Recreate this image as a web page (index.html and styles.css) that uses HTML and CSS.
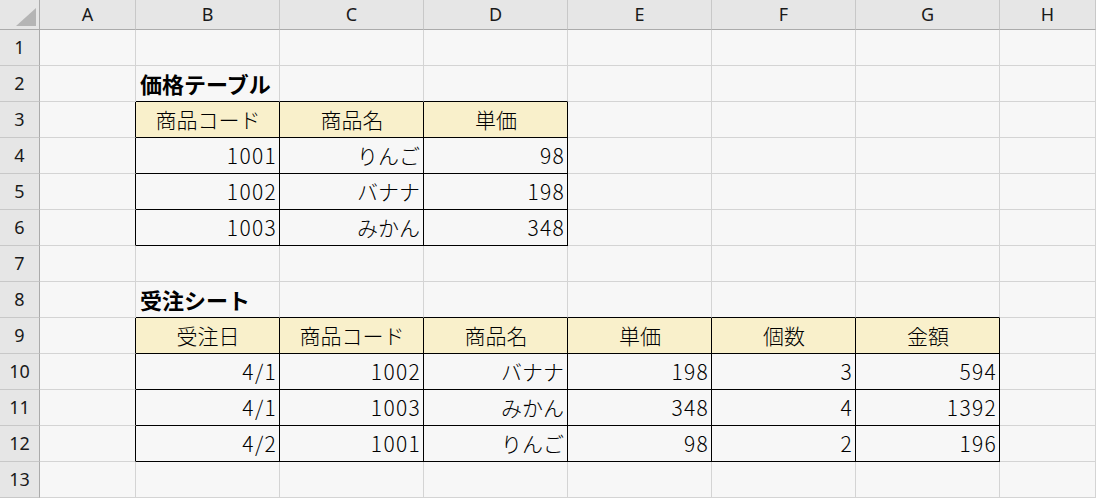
FILE: index.html
```html
<!DOCTYPE html>
<html lang="ja">
<head>
<meta charset="utf-8">
<title>Sheet</title>
<link rel="stylesheet" href="styles.css">
</head>
<body>
<div class="sheet">
  <div class="corner"><svg width="39" height="29" viewBox="0 0 39 29"><polygon points="36,8 36,26 16,26" fill="#b5b5b5"/></svg></div>
  <div class="ch">A</div><div class="ch">B</div><div class="ch">C</div><div class="ch">D</div><div class="ch">E</div><div class="ch">F</div><div class="ch">G</div><div class="ch">H</div>

  <div class="rh">1</div><div class="cell"></div><div class="cell"></div><div class="cell"></div><div class="cell"></div><div class="cell"></div><div class="cell"></div><div class="cell"></div><div class="cell"></div>

  <div class="rh">2</div><div class="cell"></div><div class="cell bb title">価格テーブル</div><div class="cell bb"></div><div class="cell bb"></div><div class="cell"></div><div class="cell"></div><div class="cell"></div><div class="cell"></div>

  <div class="rh">3</div><div class="cell br"></div><div class="cell br bb fill c">商品コード</div><div class="cell br bb fill c">商品名</div><div class="cell br bb fill c">単価</div><div class="cell"></div><div class="cell"></div><div class="cell"></div><div class="cell"></div>

  <div class="rh">4</div><div class="cell br"></div><div class="cell br bb r n">1001</div><div class="cell br bb r">りんご</div><div class="cell br bb r n">98</div><div class="cell"></div><div class="cell"></div><div class="cell"></div><div class="cell"></div>

  <div class="rh">5</div><div class="cell br"></div><div class="cell br bb r n">1002</div><div class="cell br bb r">バナナ</div><div class="cell br bb r n">198</div><div class="cell"></div><div class="cell"></div><div class="cell"></div><div class="cell"></div>

  <div class="rh">6</div><div class="cell br"></div><div class="cell br bb r n">1003</div><div class="cell br bb r">みかん</div><div class="cell br bb r n">348</div><div class="cell"></div><div class="cell"></div><div class="cell"></div><div class="cell"></div>

  <div class="rh">7</div><div class="cell"></div><div class="cell"></div><div class="cell"></div><div class="cell"></div><div class="cell"></div><div class="cell"></div><div class="cell"></div><div class="cell"></div>

  <div class="rh">8</div><div class="cell"></div><div class="cell bb title">受注シート</div><div class="cell bb"></div><div class="cell bb"></div><div class="cell bb"></div><div class="cell bb"></div><div class="cell bb"></div><div class="cell"></div>

  <div class="rh">9</div><div class="cell br"></div><div class="cell br bb fill c">受注日</div><div class="cell br bb fill c">商品コード</div><div class="cell br bb fill c">商品名</div><div class="cell br bb fill c">単価</div><div class="cell br bb fill c">個数</div><div class="cell br bb fill c">金額</div><div class="cell"></div>

  <div class="rh">10</div><div class="cell br"></div><div class="cell br bb r n">4/1</div><div class="cell br bb r n">1002</div><div class="cell br bb r">バナナ</div><div class="cell br bb r n">198</div><div class="cell br bb r n">3</div><div class="cell br bb r n">594</div><div class="cell"></div>

  <div class="rh">11</div><div class="cell br"></div><div class="cell br bb r n">4/1</div><div class="cell br bb r n">1003</div><div class="cell br bb r">みかん</div><div class="cell br bb r n">348</div><div class="cell br bb r n">4</div><div class="cell br bb r n">1392</div><div class="cell"></div>

  <div class="rh">12</div><div class="cell br"></div><div class="cell br bb r n">4/2</div><div class="cell br bb r n">1001</div><div class="cell br bb r">りんご</div><div class="cell br bb r n">98</div><div class="cell br bb r n">2</div><div class="cell br bb r n">196</div><div class="cell"></div>

  <div class="rh">13</div><div class="cell"></div><div class="cell"></div><div class="cell"></div><div class="cell"></div><div class="cell"></div><div class="cell"></div><div class="cell"></div><div class="cell"></div>
</div>
</body>
</html>
```
FILE: styles.css
```css
html, body {
  margin: 0;
  padding: 0;
  background: #f7f7f7;
  overflow: hidden;
}

.sheet {
  display: grid;
  grid-template-columns: 40px 96px repeat(6, 144px) 96px;
  grid-template-rows: 30px repeat(13, 36px);
  width: 1096px;
  font-family: "Noto Sans CJK JP", "Noto Sans", sans-serif;
  color: #000;
}

.corner {
  background: #e6e6e6;
  border-right: 1px solid #ababab;
  border-bottom: 1px solid #ababab;
  box-sizing: border-box;
  line-height: 0;
}

.ch {
  background: #e6e6e6;
  border-right: 1px solid #c8c8c8;
  border-bottom: 1px solid #ababab;
  box-sizing: border-box;
  font-family: "Noto Sans", "Open Sans", sans-serif;
  font-size: 18px;
  line-height: 29px;
  text-align: center;
  color: #1a1a1a;
}

.rh {
  background: #e6e6e6;
  border-right: 1px solid #ababab;
  border-bottom: 1px solid #c8c8c8;
  box-sizing: border-box;
  font-family: "Noto Sans", "Open Sans", sans-serif;
  font-size: 18px;
  line-height: 35px;
  text-align: center;
  color: #1a1a1a;
}

.cell {
  background: #f7f7f7;
  border-right: 1px solid #d4d4d4;
  border-bottom: 1px solid #d4d4d4;
  box-sizing: border-box;
  font-size: 21px;
  font-weight: 300;
  line-height: 35px;
  padding: 0 3px 0 4px;
  white-space: nowrap;
}

.br { border-right-color: #000; }
.bb { border-bottom-color: #000; }

.fill { background: #f9f0cb; }
.c { text-align: center; }
.r { text-align: right; }
.n { letter-spacing: 1.3px; padding-right: 2px; }
.title { font-weight: bold; font-size: 22px; padding-left: 4px; }
```
